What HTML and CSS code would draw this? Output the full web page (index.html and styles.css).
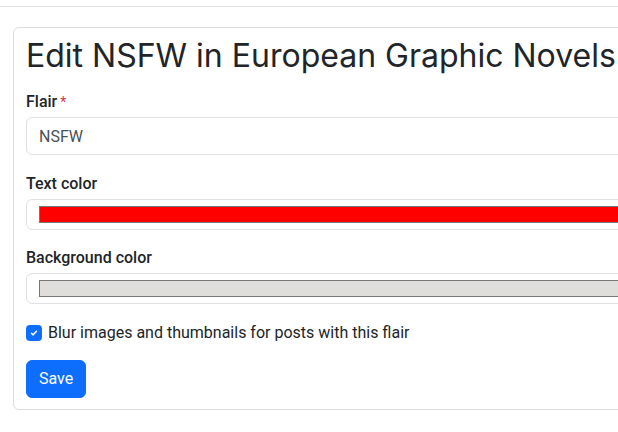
FILE: index.html
```html
<!DOCTYPE html>
<html>
<head>
  <title>Edit flair</title>
  <link rel="stylesheet" href="styles.css">
</head>
<body>
  <div class="topbar"></div>
  <main class="page">
    <div class="card">
      <h1 class="title">Edit NSFW in European Graphic Novels</h1>

      <div class="field">
        <label class="form-label" for="flair">Flair<span class="required">*</span></label>
        <input class="form-control" id="flair" type="text" value="NSFW">
      </div>

      <div class="field">
        <label class="form-label">Text color</label>
        <div class="color-control">
          <div class="swatch swatch-red"></div>
        </div>
      </div>

      <div class="field">
        <label class="form-label">Background color</label>
        <div class="color-control">
          <div class="swatch swatch-gray"></div>
        </div>
      </div>

      <div class="check">
        <span class="check-box">
          <svg width="10" height="10" viewBox="0 0 20 20"><path d="M5 10.5l3.2 3.2L15 6.5" fill="none" stroke="#fff" stroke-width="3" stroke-linecap="round" stroke-linejoin="round"/></svg>
        </span>
        <span class="check-label">Blur images and thumbnails for posts with this flair</span>
      </div>

      <div>
        <button class="btn">Save</button>
      </div>
    </div>
  </main>
</body>
</html>
```

FILE: styles.css
```css
html, body {
  overflow: hidden;
}

body {
  margin: 0;
  font-family: Roboto, "Liberation Sans", sans-serif;
  font-size: 16px;
  line-height: 1.5;
  color: #212529;
  background-color: #fff;
}

.topbar {
  height: 6px;
  border-bottom: 1px solid #dee2e6;
}

.page {
  padding: 20px 0 0 13px;
}

.card {
  width: 700px;
  border: 1px solid #dcdcdc;
  border-radius: 6px;
  padding: 9px 12px 11px;
}

.title {
  margin: 0 0 15px;
  font-family: Inter, Roboto, sans-serif;
  font-size: 32px;
  font-weight: 400;
  line-height: 1.2;
}

.field {
  display: flex;
  flex-direction: column;
  margin-bottom: 16.5px;
}

.form-label {
  display: block;
  margin-bottom: 3px;
  font-weight: 500;
}

.required {
  color: #dc3545;
  margin-left: 3px;
  font-weight: 400;
  font-size: 14px;
}

.form-control {
  display: block;
  box-sizing: border-box;
  width: 100%;
  height: 38px;
  padding: 6px 12px;
  font-family: inherit;
  font-size: 16px;
  color: #495057;
  border: 1px solid #dee2e6;
  border-radius: 6px;
  outline: none;
}

.color-control {
  box-sizing: border-box;
  height: 31px;
  padding: 6px 12px;
  border: 1px solid #dee2e6;
  border-radius: 6px;
}

.swatch {
  height: 17px;
  box-sizing: border-box;
  border: 1px solid #777;
}

.swatch-red {
  background-color: #ff0000;
}

.swatch-gray {
  background-color: #dfdeda;
}

.check {
  display: flex;
  align-items: center;
  gap: 6px;
  margin: 12px 0 15px;
}

.check-box {
  display: flex;
  align-items: center;
  justify-content: center;
  width: 16px;
  height: 16px;
  border-radius: 4px;
  background-color: #0d6efd;
}

.btn {
  padding: 6px 12px;
  font-family: inherit;
  font-size: 16px;
  line-height: 1.5;
  color: #fff;
  background-color: #0d6efd;
  border: 1px solid #0d6efd;
  border-radius: 6px;
  cursor: pointer;
}
```
